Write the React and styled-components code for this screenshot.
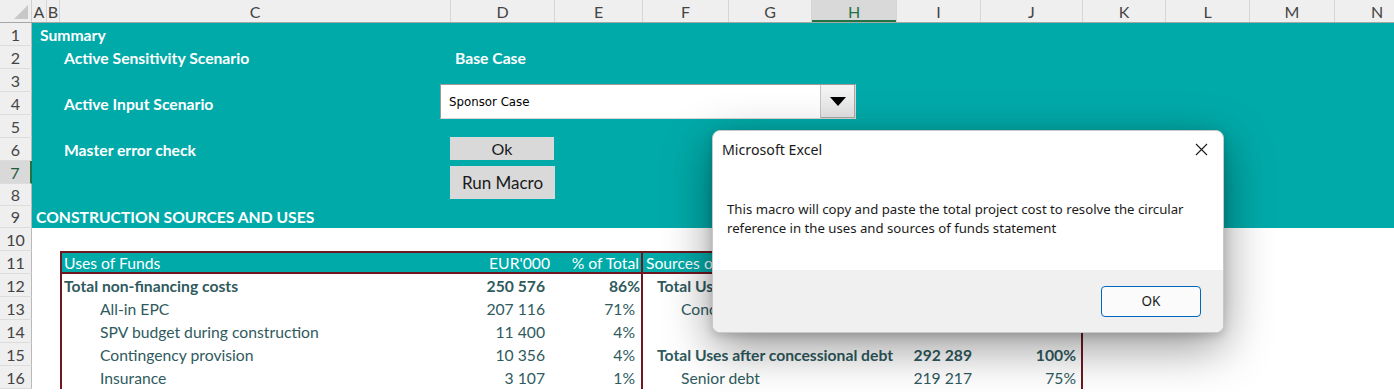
import React from "react";
import styled, { createGlobalStyle } from "styled-components";

const TEAL = "#00aaa9";
const MAROON = "#6f1821";
const INK = "#2f5a5e";
const XL_GREEN = "#217346";

const COLS = { A: 15, B: 13, C: 391, D: 104, E: 88, F: 86, G: 83, H: 85, I: 84, J: 102, K: 83, L: 84, M: 85, N: 85 };
const LETTERS = Object.keys(COLS);
const TEMPLATE = LETTERS.map((l) => `${COLS[l]}px`).join(" ");
const line = (l) => LETTERS.indexOf(l) + 1;
const ROW_H = [23, 23, 23, 23, 23, 23, 23, 22, 22, 23, 23, 23, 23, 23, 23, 23];

const GlobalStyle = createGlobalStyle`
  html, body {
    margin: 0;
    padding: 0;
    background: #ffffff;
    overflow: hidden;
  }
  #root {
    width: 1394px;
    height: 392px;
    overflow: hidden;
  }
`;

/* ---------- SHEET FRAME ---------- */
const Sheet = styled.div`
  position: relative;
  width: 1420px;
  font-family: Lato, "Liberation Sans", sans-serif;
  font-size: 15.7px;
`;

const ColumnBar = styled.div`
  display: flex;
  height: 23px;
  background: #efefef;
  border-bottom: 1px solid #a6a6a6;
  box-sizing: border-box;
`;

const Corner = styled.div`
  width: 32px;
  flex: none;
  display: flex;
  align-items: flex-end;
  justify-content: flex-end;
  padding: 0 3px 3px 0;
  box-sizing: border-box;
  border-right: 1px solid #d0d0d0;

  svg {
    display: block;
  }
`;

const Letters = styled.div`
  display: grid;
  grid-template-columns: ${TEMPLATE};
`;

const Letter = styled.div`
  display: flex;
  align-items: center;
  justify-content: center;
  border-right: 1px solid #d6d6d6;
  box-sizing: border-box;
  color: ${(p) => (p.$active ? XL_GREEN : "#444444")};
  background: ${(p) => (p.$active ? "#d9d9d9" : "transparent")};
  box-shadow: ${(p) => (p.$active ? `inset 0 -2px 0 ${XL_GREEN}` : "none")};
  font-size: 16px;
`;

const Body = styled.div`
  display: flex;
`;

const RowHeads = styled.div`
  width: 32px;
  flex: none;
  display: flex;
  flex-direction: column;
  background: #efefef;
`;

const RowNum = styled.div`
  height: ${(p) => p.$h}px;
  display: flex;
  align-items: center;
  justify-content: center;
  box-sizing: border-box;
  border-bottom: 1px solid #dcdcdc;
  border-right: ${(p) => (p.$active ? `2px solid ${XL_GREEN}` : "1px solid #b9b9b9")};
  background: ${(p) => (p.$active ? "#d9d9d9" : "transparent")};
  color: ${(p) => (p.$active ? "#1e5a37" : "#444444")};
  font-size: 16px;
`;

const Cells = styled.div`
  display: flex;
  flex-direction: column;
`;

const Band = styled.div`
  background: ${TEAL};
  color: #ffffff;
  font-weight: 700;
`;

const Row = styled.div`
  display: grid;
  grid-template-columns: ${TEMPLATE};
  height: ${(p) => p.$h}px;
`;

const Cell = styled.div`
  grid-row: 1;
  grid-column: ${(p) => line(p.$from)} / ${(p) => line(p.$to || p.$from) + 1};
  display: flex;
  align-items: center;
  justify-content: ${(p) => (p.$right ? "flex-end" : "flex-start")};
  padding: 0 ${(p) => p.$pr ?? 4}px 0 ${(p) => p.$pl ?? 4}px;
  box-sizing: border-box;
  white-space: nowrap;
  overflow: hidden;
  font-weight: ${(p) => (p.$bold ? 700 : "inherit")};
`;

const TableCell = styled(Cell)`
  color: ${(p) => (p.$head ? "#ffffff" : INK)};
  background: ${(p) => (p.$head ? TEAL : "transparent")};
  border-top: ${(p) => (p.$head ? `2px solid ${MAROON}` : "none")};
  border-bottom: ${(p) => (p.$head ? `2px solid ${MAROON}` : "none")};
  border-left: ${(p) => (p.$edgeL ? `2px solid ${MAROON}` : "none")};
  border-right: ${(p) => (p.$edgeR ? `2px solid ${MAROON}` : "none")};
`;

/* ---------- FLOATING CONTROLS ---------- */
const Combo = styled.div`
  position: absolute;
  left: 440px;
  top: 84px;
  width: 416px;
  height: 35px;
  display: flex;
  box-sizing: border-box;
  background: #ffffff;
  border: 1px solid #9a9a9a;
  border-right-color: #d8d8d8;
  border-bottom-color: #d8d8d8;
  font-family: "DejaVu Sans", "Noto Sans", sans-serif;
  font-size: 11.8px;
  color: #000000;
`;

const ComboText = styled.div`
  flex: 1;
  display: flex;
  align-items: center;
  padding-left: 8px;
`;

const ComboArrow = styled.div`
  width: 34px;
  display: flex;
  align-items: center;
  justify-content: center;
  background: linear-gradient(#f4f4f4, #e4e4e4);
  border-left: 1px solid #c4c4c4;
  box-shadow: inset -1px -1px 0 #a8a8a8;
`;

const FormButton = styled.div`
  position: absolute;
  left: 450px;
  top: ${(p) => p.$top}px;
  width: ${(p) => p.$w}px;
  height: ${(p) => p.$h}px;
  display: flex;
  align-items: center;
  justify-content: center;
  box-sizing: border-box;
  background: ${(p) => (p.$raised ? "#f0f0f0" : "#d9d9d9")};
  border: ${(p) => (p.$raised ? "2px solid" : "none")};
  border-color: #8c8c8c #e6e6e6 #e6e6e6 #8c8c8c;
  color: #1a1a1a;
  font-family: Lato, sans-serif;
  font-size: ${(p) => p.$fs}px;
`;

/* ---------- MESSAGE BOX ---------- */
const Dialog = styled.div`
  position: absolute;
  left: 712px;
  top: 130px;
  width: 512px;
  height: 203px;
  display: flex;
  flex-direction: column;
  box-sizing: border-box;
  background: #ffffff;
  border: 1px solid #c9c9c9;
  border-radius: 8px;
  overflow: hidden;
  box-shadow: 0 14px 48px rgba(0, 0, 0, 0.42), 0 3px 10px rgba(0, 0, 0, 0.16);
  font-family: "Noto Sans", "Open Sans", sans-serif;
  color: #1a1a1a;
`;

const TitleBar = styled.div`
  height: 36px;
  display: flex;
  align-items: center;
  justify-content: space-between;
  padding: 0 15px 0 9px;
  font-size: 14.2px;
`;

const Message = styled.div`
  flex: 1;
  padding: 33px 14px 0;
  font-size: 13.2px;
  line-height: 19px;
`;

const Footer = styled.div`
  height: 62px;
  display: flex;
  align-items: center;
  justify-content: flex-end;
  padding-right: 22px;
  background: #f0f0f0;
`;

const OkButton = styled.div`
  width: 100px;
  height: 31px;
  display: flex;
  align-items: center;
  justify-content: center;
  box-sizing: border-box;
  border: 1px solid #0067c0;
  border-radius: 4px;
  background: #fbfbfb;
  font-size: 13.5px;
`;

const CloseIcon = () => (
  <svg width="13" height="13" viewBox="0 0 13 13">
    <path d="M1 1 L12 12 M12 1 L1 12" stroke="#1a1a1a" strokeWidth="1.1" fill="none" />
  </svg>
);

const usesRows = [
  { label: "Total non-financing costs", eur: "250 576", pct: "86%", bold: true },
  { label: "All-in EPC", eur: "207 116", pct: "71%" },
  { label: "SPV budget during construction", eur: "11 400", pct: "4%" },
  { label: "Contingency provision", eur: "10 356", pct: "4%" },
  { label: "Insurance", eur: "3 107", pct: "1%" },
];

const sourcesRows = [
  { label: "Total Uses", eur: "292 289", pct: "100%", bold: true },
  { label: "Concessional debt", eur: "0", pct: "0%" },
  null,
  { label: "Total Uses after concessional debt", eur: "292 289", pct: "100%", bold: true },
  { label: "Senior debt", eur: "219 217", pct: "75%" },
];

const TableRow = ({ h, uses, src }) => (
  <Row $h={h}>
    <TableCell $from="C" $edgeL $bold={uses.bold} $pl={uses.bold ? 2 : 38}>
      {uses.label}
    </TableCell>
    <TableCell $from="D" $right $bold={uses.bold} $pr={10}>
      {uses.eur}
    </TableCell>
    <TableCell $from="E" $right $edgeR $bold={uses.bold} $pr={uses.bold ? 1 : 6}>
      {uses.pct}
    </TableCell>
    <TableCell $from="F" $to="H" $bold={src?.bold} $pl={src?.bold ? 14 : 38}>
      {src?.label}
    </TableCell>
    <TableCell $from="I" $right $bold={src?.bold} $pr={9}>
      {src?.eur}
    </TableCell>
    <TableCell $from="J" $right $edgeR $bold={src?.bold} $pr={5}>
      {src?.pct}
    </TableCell>
  </Row>
);

export default function App() {
  return (
    <>
      <GlobalStyle />
      <Sheet>
        <ColumnBar>
          <Corner>
            <svg width="14" height="14" viewBox="0 0 14 14">
              <path d="M14 0 L14 14 L0 14 Z" fill="#c8c8c8" />
            </svg>
          </Corner>
          <Letters>
            {LETTERS.map((l) => (
              <Letter key={l} $active={l === "H"}>
                {l}
              </Letter>
            ))}
          </Letters>
        </ColumnBar>

        <Body>
          <RowHeads>
            {ROW_H.map((h, i) => (
              <RowNum key={i} $h={h} $active={i === 6}>
                {i + 1}
              </RowNum>
            ))}
          </RowHeads>

          <Cells>
            <Band>
              <Row $h={ROW_H[0]}>
                <Cell $from="A" $to="C" $pl={8}>Summary</Cell>
              </Row>
              <Row $h={ROW_H[1]}>
                <Cell $from="C">Active Sensitivity Scenario</Cell>
                <Cell $from="D" $to="E">Base Case</Cell>
              </Row>
              <Row $h={ROW_H[2]} />
              <Row $h={ROW_H[3]}>
                <Cell $from="C">Active Input Scenario</Cell>
              </Row>
              <Row $h={ROW_H[4]} />
              <Row $h={ROW_H[5]}>
                <Cell $from="C">Master error check</Cell>
              </Row>
              <Row $h={ROW_H[6]} />
              <Row $h={ROW_H[7]} />
              <Row $h={ROW_H[8]}>
                <Cell $from="A" $to="C">CONSTRUCTION SOURCES AND USES</Cell>
              </Row>
            </Band>

            <Row $h={ROW_H[9]} />

            <Row $h={ROW_H[10]}>
              <TableCell $from="C" $head $edgeL $pl={2}>Uses of Funds</TableCell>
              <TableCell $from="D" $head $right $pr={5}>EUR'000</TableCell>
              <TableCell $from="E" $head $right $edgeR $pr={2}>% of Total</TableCell>
              <TableCell $from="F" $to="H" $head $pl={3}>Sources of Funds</TableCell>
              <TableCell $from="I" $head $right $pr={5}>EUR'000</TableCell>
              <TableCell $from="J" $head $right $edgeR $pr={2}>% of Total</TableCell>
            </Row>

            {usesRows.map((u, i) => (
              <TableRow key={i} h={ROW_H[11 + i]} uses={u} src={sourcesRows[i]} />
            ))}
          </Cells>
        </Body>

        <Combo>
          <ComboText>Sponsor Case</ComboText>
          <ComboArrow>
            <svg width="16" height="9" viewBox="0 0 16 9">
              <path d="M0 0 L16 0 L8 9 Z" fill="#000000" />
            </svg>
          </ComboArrow>
        </Combo>

        <FormButton $top={137} $w={104} $h={23} $fs={16}>Ok</FormButton>
        <FormButton $top={166} $w={105} $h={33} $fs={17}>Run Macro</FormButton>

        <Dialog>
          <TitleBar>
            <span>Microsoft Excel</span>
            <CloseIcon />
          </TitleBar>
          <Message>
            This macro will copy and paste the total project cost to resolve the circular
            <br />
            reference in the uses and sources of funds statement
          </Message>
          <Footer>
            <OkButton>OK</OkButton>
          </Footer>
        </Dialog>
      </Sheet>
    </>
  );
}
